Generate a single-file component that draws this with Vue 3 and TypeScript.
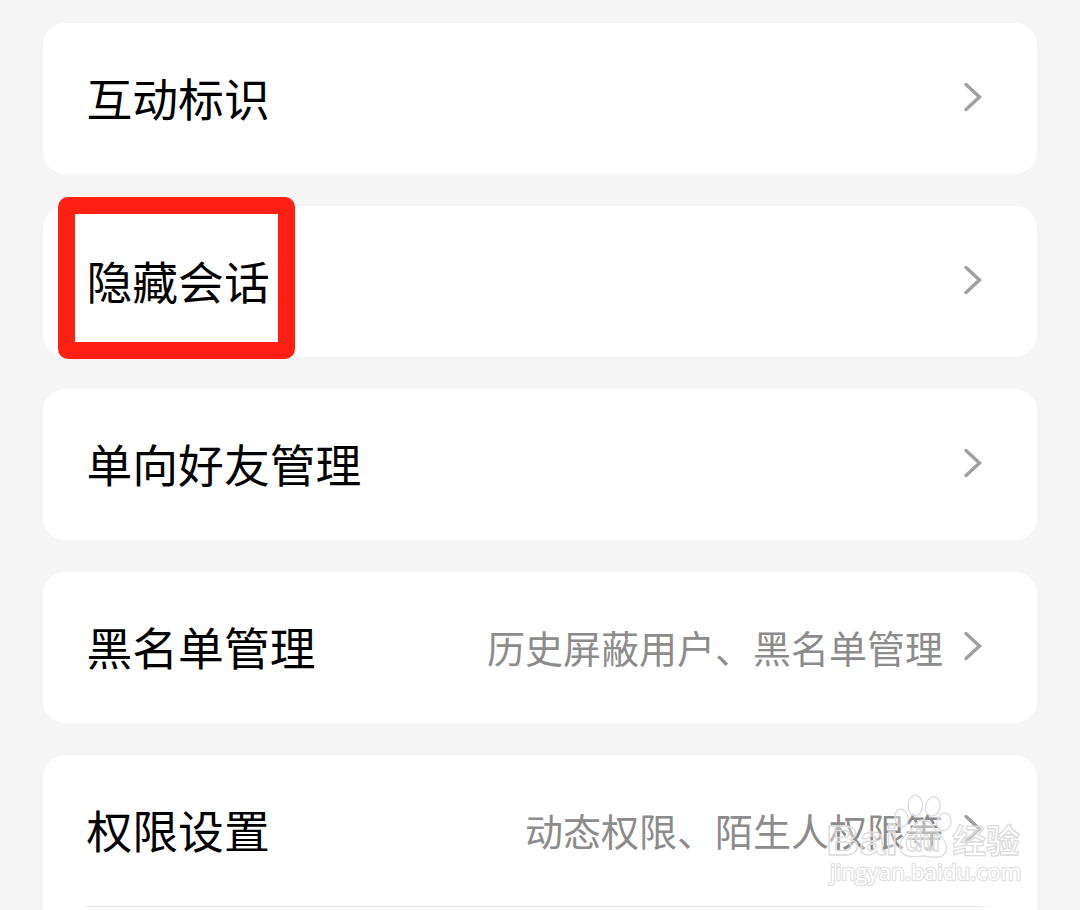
<template>
  <div class="settings-page">
    <section v-for="item in items" :key="item.title" class="card">
      <div class="row">
        <span class="title" :class="{ marked: item.marked }">{{ item.title }}</span>
        <span v-if="item.desc" class="desc">{{ item.desc }}</span>
        <svg class="arrow" viewBox="0 0 20 32" fill="none">
          <path d="M3 3.5 L16.5 16 L3 28.5" />
        </svg>
      </div>
      <div v-if="item.divider" class="divider"></div>
    </section>

    <svg class="watermark" viewBox="0 0 210 110">
      <g class="paw">
        <ellipse cx="94.3" cy="20.5" rx="7.2" ry="10.3" />
        <ellipse cx="111.8" cy="21.5" rx="7.2" ry="9.8" transform="rotate(12 111.8 21.5)" />
        <ellipse cx="80.5" cy="33" rx="6.5" ry="9" transform="rotate(-12 80.5 33)" />
        <ellipse cx="123" cy="37" rx="7" ry="9" transform="rotate(15 123 37)" />
        <path d="M102 35 C95 35 93 42 88 47 C81 53 78 57 79 63 C81 73 91 72 102 71 C112 72 122 75 125 66 C127 58 122 54 117 48 C112 42 110 35 102 35 Z" />
      </g>
      <g class="brand">
        <text x="5" y="69.5" font-size="43" textLength="72" lengthAdjust="spacingAndGlyphs">Bai</text>
        <text x="84" y="66" font-size="29" textLength="35">du</text>
        <text x="131.5" y="67.5" font-size="33.5">经验</text>
      </g>
      <text class="site" x="9" y="95" textLength="191">jingyan.baidu.com</text>
    </svg>
  </div>
</template>

<script setup lang="ts">
interface SettingItem {
  title: string
  desc?: string
  marked?: boolean
  divider?: boolean
}

const items: SettingItem[] = [
  { title: '互动标识' },
  { title: '隐藏会话', marked: true },
  { title: '单向好友管理' },
  { title: '黑名单管理', desc: '历史屏蔽用户、黑名单管理' },
  { title: '权限设置', desc: '动态权限、陌生人权限等', divider: true }
]
</script>

<style>
body {
  margin: 0;
  background: #f5f5f5;
}
</style>

<style scoped>
.settings-page {
  position: relative;
  box-sizing: border-box;
  height: 910px;
  padding: 23px 43px 0;
  display: flex;
  flex-direction: column;
  gap: 32px;
  overflow: hidden;
  background: #f5f5f5;
  font-family: "Noto Sans CJK SC", sans-serif;
}

.card {
  flex: none;
  height: 151px;
  border-radius: 22px;
  background: #fff;
}

.card:last-of-type {
  height: 180px;
}

.row {
  box-sizing: border-box;
  display: flex;
  align-items: center;
  height: 151px;
  padding: 0 54px 4px 43.5px;
}

.title {
  position: relative;
  padding-top: 1px;
  font-size: 45.8px;
  line-height: 60px;
  color: #000;
}

/* Red highlight frame around the entry */
.marked::after {
  content: "";
  position: absolute;
  left: -28.5px;
  top: -52.5px;
  box-sizing: border-box;
  width: 237px;
  height: 162px;
  border: 17px solid #ff2013;
  border-radius: 10px;
}

.desc {
  margin-left: auto;
  padding-top: 2px;
  font-size: 38px;
  line-height: 50px;
  color: #8c8c8c;
}

.arrow {
  flex: none;
  width: 20px;
  height: 32px;
  margin-left: auto;
}

.desc + .arrow {
  margin-left: 20px;
}

.arrow path {
  stroke: #a0a0a0;
  stroke-width: 3.4;
  stroke-linecap: round;
}

.divider {
  height: 1px;
  margin: 0 43px;
  background: linear-gradient(to right, #e3e3e3 98%, #fff);
}

.watermark {
  position: absolute;
  left: 821px;
  top: 785px;
  width: 210px;
  height: 110px;
}

.watermark .paw > *,
.watermark text {
  fill: rgba(255, 255, 255, 0.4);
  stroke: #dcdcdc;
  stroke-width: 1.3;
}

.brand text {
  font-family: "Liberation Sans", "Noto Sans CJK SC", sans-serif;
  font-weight: 700;
}

.watermark .site {
  font-family: "Open Sans", sans-serif;
  font-size: 22px;
  font-weight: 400;
  paint-order: stroke;
  stroke-width: 2.6;
  stroke-linejoin: round;
  stroke: #e2e2e2;
  fill: #fff;
}
</style>
